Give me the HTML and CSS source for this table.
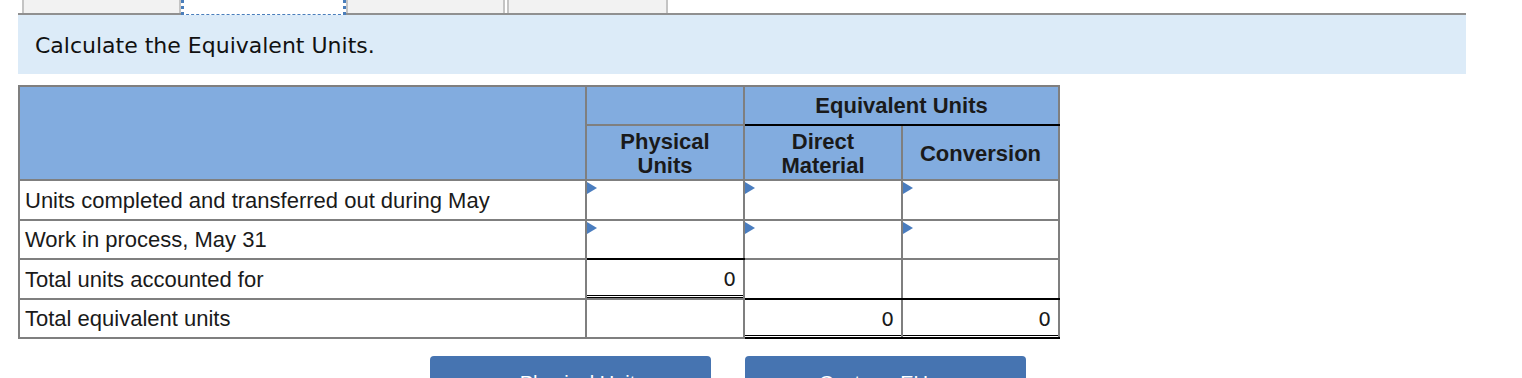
FILE: index.html
```html
<!DOCTYPE html>
<html lang="en">
<head>
<meta charset="utf-8">
<title>Calculate the Equivalent Units</title>
<link rel="stylesheet" href="styles.css">
</head>
<body>
<div class="page">
  <div class="tabs">
    <div class="tab tab-a"></div>
    <div class="tab tab-active"></div>
    <div class="tab tab-c"></div>
    <div class="tab tab-d"></div>
  </div>
  <div class="prompt">Calculate the Equivalent Units.</div>
  <table class="eu">
    <colgroup>
      <col class="c-label">
      <col class="c-num">
      <col class="c-num">
      <col class="c-last">
    </colgroup>
    <thead>
      <tr class="h1">
        <th rowspan="2"></th>
        <th class="ph-top"></th>
        <th colspan="2" class="eq">Equivalent Units</th>
      </tr>
      <tr class="h2">
        <th>Physical<br>Units</th>
        <th>Direct<br>Material</th>
        <th>Conversion</th>
      </tr>
    </thead>
    <tbody>
      <tr class="r1">
        <td class="label">Units completed and transferred out during May</td>
        <td class="input"><span class="tri"></span></td>
        <td class="input"><span class="tri"></span></td>
        <td class="input"><span class="tri"></span></td>
      </tr>
      <tr class="r2">
        <td class="label">Work in process, May 31</td>
        <td class="input bb-black"><span class="tri"></span></td>
        <td class="input"><span class="tri"></span></td>
        <td class="input"><span class="tri"></span></td>
      </tr>
      <tr class="r3">
        <td class="label">Total units accounted for</td>
        <td class="num total-inner">0</td>
        <td class="num bb-black"></td>
        <td class="num bb-black"></td>
      </tr>
      <tr class="r4">
        <td class="label">Total equivalent units</td>
        <td class="num"></td>
        <td class="num total-outer">0</td>
        <td class="num total-outer">0</td>
      </tr>
    </tbody>
  </table>
  <div class="nav">
    <button class="btn" type="button"><span class="chev">&lsaquo;</span>Physical Units</button>
    <button class="btn" type="button">Cost per EU<span class="chev chev-r">&rsaquo;</span></button>
  </div>
</div>
</body>
</html>
```

FILE: styles.css
```css
html, body {
  margin: 0;
  padding: 0;
  background: #ffffff;
}

body {
  font-family: "Liberation Sans", Arial, sans-serif;
  color: #1a1a1a;
  overflow: hidden;
}

.page {
  padding-left: 18px;
  width: 1448px;
}

/* top tab strip (cut off at the top of the viewport) */
.tabs {
  display: flex;
  height: 13px;
  padding-left: 4px;
  border-bottom: 2px solid #909090;
}

.tab {
  box-sizing: border-box;
  height: 13px;
  background: #f2f2f2;
  border-left: 2px solid #c4c4c4;
  border-right: 2px solid #c4c4c4;
}

.tab-a { width: 159px; }

.tab-active {
  width: 165px;
  height: 15px;
  margin-bottom: -2px;
  background: #ffffff;
  border-left: 3px dotted #4a7ebb;
  border-right: 3px dotted #4a7ebb;
  border-bottom: 1px dashed #4a7ebb;
}

.tab-c { width: 159px; margin-right: 2px; }
.tab-d { width: 161px; }

/* prompt band */
.prompt {
  box-sizing: border-box;
  height: 59px;
  padding: 2px 0 0 17px;
  display: flex;
  align-items: center;
  background: #dcebf8;
  font-family: "DejaVu Sans", Verdana, sans-serif;
  font-size: 22px;
  color: #111111;
}

/* equivalent units table */
.eu {
  margin-top: 11px;
  border-collapse: collapse;
  table-layout: fixed;
  width: 1040px;
  font-size: 22px;
}

.c-label { width: 567px; }
.c-num { width: 158px; }
.c-last { width: 157px; }

.eu th,
.eu td {
  border: 2px solid #7f7f7f;
  padding: 0;
}

.eu th {
  background: #82acdf;
  font-weight: bold;
  line-height: 24px;
  text-align: center;
  color: #1a1a1a;
}

.eu .h2 th {
  padding-top: 3px;
}

.eu .eq {
  border-bottom-color: #000000;
}

.h1 { height: 39px; }
.h2 { height: 55px; }
.r1 { height: 40px; }
.r2 { height: 39px; }
.r3 { height: 40px; }
.r4 { height: 39px; }

.eu .label {
  padding: 1px 0 0 5px;
  text-align: left;
  vertical-align: middle;
}

.eu .input {
  position: relative;
}

.tri {
  position: absolute;
  top: 1px;
  left: 0;
  width: 0;
  height: 0;
  border-left: 10px solid #4a7dbf;
  border-top: 6px solid transparent;
  border-bottom: 6px solid transparent;
}

.eu .bb-black {
  border-bottom-color: #000000;
}

.eu .num {
  text-align: right;
  padding-right: 7px;
  font-family: "DejaVu Sans", Verdana, sans-serif;
  font-size: 20px;
  vertical-align: middle;
}

.eu .total-inner {
  box-shadow: inset 0 -1px 0 #000000, inset 0 -2px 0 #ffffff, inset 0 -3px 0 #000000;
}

.eu .total-outer {
  border-bottom-color: #000000;
  box-shadow: inset 0 -1px 0 #ffffff, inset 0 -2px 0 #000000;
}

/* navigation buttons */
.nav {
  display: flex;
  gap: 34px;
  margin-top: 17px;
  padding-left: 412px;
}

.btn {
  box-sizing: border-box;
  width: 281px;
  height: 50px;
  border: none;
  border-radius: 4px;
  background: #4674b1;
  color: #ffffff;
  font-family: "Liberation Sans", Arial, sans-serif;
  font-size: 20px;
  line-height: 22px;
  text-align: center;
  display: flex;
  align-items: flex-start;
  justify-content: center;
  gap: 14px;
  padding: 16px 0 0;
}

.chev {
  font-size: 30px;
  line-height: 22px;
}
```
